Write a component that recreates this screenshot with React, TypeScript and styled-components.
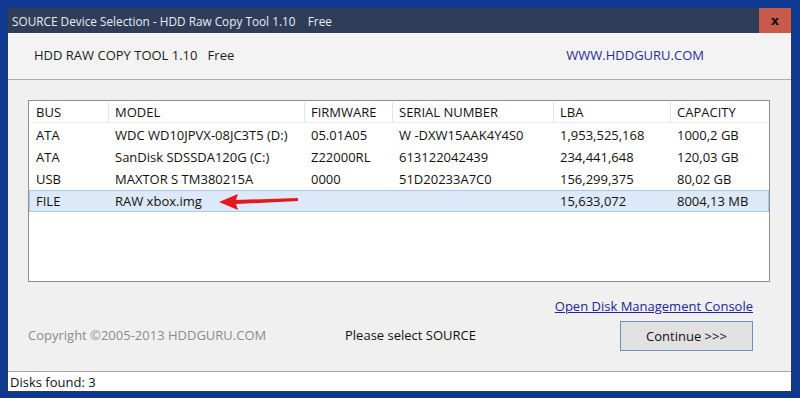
import styled, { createGlobalStyle } from 'styled-components';

const GlobalStyle = createGlobalStyle`
  html, body {
    margin: 0;
    padding: 0;
    background: #0d3a90;
  }
  body {
    font-family: 'Open Sans', 'Noto Sans', sans-serif;
    font-size: 13px;
    color: #111;
  }
`;

const Desktop = styled.div`
  width: 800px;
  height: 398px;
  box-sizing: border-box;
  padding: 8px 8px 7px 7px;
  background: #0d3a90;
`;
const Window = styled.div`
  display: flex;
  flex-direction: column;
  height: 100%;
  border: 1px solid #2b3853;
  border-top: none;
  background: #f0f0f0;
`;
const TitleBar = styled.div`
  display: flex;
  align-items: center;
  height: 25px;
  background: #2f3d59;
  color: #e9edf3;
  padding-left: 4px;
  font-size: 11.8px;
`;
const TitleText = styled.span`
  flex: 1;
  white-space: pre;
`;
const CloseButton = styled.div`
  display: flex;
  align-items: center;
  justify-content: center;
  width: 32px;
  height: 25px;
  background: #c75a4b;
  color: #111;
  font-family: 'DejaVu Sans', sans-serif;
  font-weight: 700;
  font-size: 13px;
`;
const Header = styled.div`
  display: flex;
  align-items: center;
  height: 46px;
  padding: 0 26px;
  background: #f3f3f3;
  border-bottom: 1px solid #adadad;
`;
const Product = styled.span`
  flex: 1;
  white-space: pre;
  color: #1b1b1b;
  padding-bottom: 2px;
`;
const SiteLink = styled.span`
  color: #2b2c98;
  margin-right: 61px;
  padding-bottom: 2px;
`;
const Body = styled.div`
  display: flex;
  flex-direction: column;
  flex: 1;
  padding: 20px 21px 0 20px;
`;
const Table = styled.div`
  height: 182px;
  box-sizing: border-box;
  border: 1px solid #8e8e8e;
  background: #fff;
`;
const Row = styled.div<{ selected?: boolean }>`
  display: grid;
  grid-template-columns: 79px 196px 88px 161px 117px 1fr;
  height: 22px;
  box-sizing: border-box;
  align-items: center;
  border: 1px solid ${({ selected }) => (selected ? '#a9c7ea' : 'transparent')};
  background: ${({ selected }) => (selected ? '#dde9f8' : 'transparent')};
`;
const HeadRow = styled(Row)`
  height: 23px;
  align-items: stretch;
`;
const HeadCell = styled.div`
  display: flex;
  align-items: center;
  padding-left: 6px;
  border-right: 1px solid #e3e3e3;
  border-bottom: 1px solid #eeeeee;
  &:last-child {
    border-right: none;
  }
`;
const Cell = styled.div`
  display: flex;
  align-items: center;
  padding-left: 6px;
  white-space: nowrap;
`;
const Arrow = styled.svg`
  margin-left: 17px;
  flex: none;
`;
const Footer = styled.div`
  display: grid;
  grid-template-columns: 317px 1fr auto;
  align-items: end;
  padding: 15px 17px 0 0;
`;
const Copyright = styled.span`
  color: #8b8b8b;
  padding-bottom: 7px;
`;
const Prompt = styled.span`
  padding-bottom: 7px;
`;
const Actions = styled.div`
  display: flex;
  flex-direction: column;
  align-items: flex-end;
  gap: 6px;
`;
const ConsoleLink = styled.a`
  color: #23239a;
  text-decoration: underline;
  line-height: 18px;
`;
const Button = styled.button`
  width: 133px;
  height: 30px;
  font: inherit;
  color: #111;
  background: #e1e1e1;
  border: 1px solid #6f90bd;
  padding: 0;
`;
const StatusBar = styled.div`
  display: flex;
  align-items: center;
  height: 19px;
  margin-top: auto;
  padding-left: 2px;
  background: #fff;
  border-top: 1px solid #a6a6a6;
`;

const columns = ['BUS', 'MODEL', 'FIRMWARE', 'SERIAL NUMBER', 'LBA', 'CAPACITY'];
const disks = [
  ['ATA', 'WDC WD10JPVX-08JC3T5 (D:)', '05.01A05', 'W -DXW15AAK4Y4S0', '1,953,525,168', '1000,2 GB'],
  ['ATA', 'SanDisk SDSSDA120G (C:)', 'Z22000RL', '613122042439', '234,441,648', '120,03 GB'],
  ['USB', 'MAXTOR S TM380215A', '0000', '51D20233A7C0', '156,299,375', '80,02 GB'],
];

export default function App() {
  return (
    <>
      <GlobalStyle />
      <Desktop>
        <Window>
          <TitleBar>
            <TitleText>SOURCE Device Selection - HDD Raw Copy Tool 1.10    Free</TitleText>
            <CloseButton>x</CloseButton>
          </TitleBar>
          <Header>
            <Product>HDD RAW COPY TOOL 1.10   Free</Product>
            <SiteLink>WWW.HDDGURU.COM</SiteLink>
          </Header>
          <Body>
            <Table>
              <HeadRow>
                {columns.map((c) => (
                  <HeadCell key={c}>{c}</HeadCell>
                ))}
              </HeadRow>
              {disks.map((d) => (
                <Row key={d[1]}>
                  {d.map((v, i) => (
                    <Cell key={i}>{v}</Cell>
                  ))}
                </Row>
              ))}
              <Row selected>
                <Cell>FILE</Cell>
                <Cell>
                  RAW xbox.img
                  <Arrow width="80" height="20" viewBox="0 0 80 20">
                    <polygon points="0,11 19,3 17,9 79,7 79,10 17,13 19,19" fill="#e3191b" />
                  </Arrow>
                </Cell>
                <Cell />
                <Cell />
                <Cell>15,633,072</Cell>
                <Cell>8004,13 MB</Cell>
              </Row>
            </Table>
            <Footer>
              <Copyright>Copyright ©2005-2013 HDDGURU.COM</Copyright>
              <Prompt>Please select SOURCE</Prompt>
              <Actions>
                <ConsoleLink>Open Disk Management Console</ConsoleLink>
                <Button>Continue &gt;&gt;&gt;</Button>
              </Actions>
            </Footer>
          </Body>
          <StatusBar>Disks found: 3</StatusBar>
        </Window>
      </Desktop>
    </>
  );
}
